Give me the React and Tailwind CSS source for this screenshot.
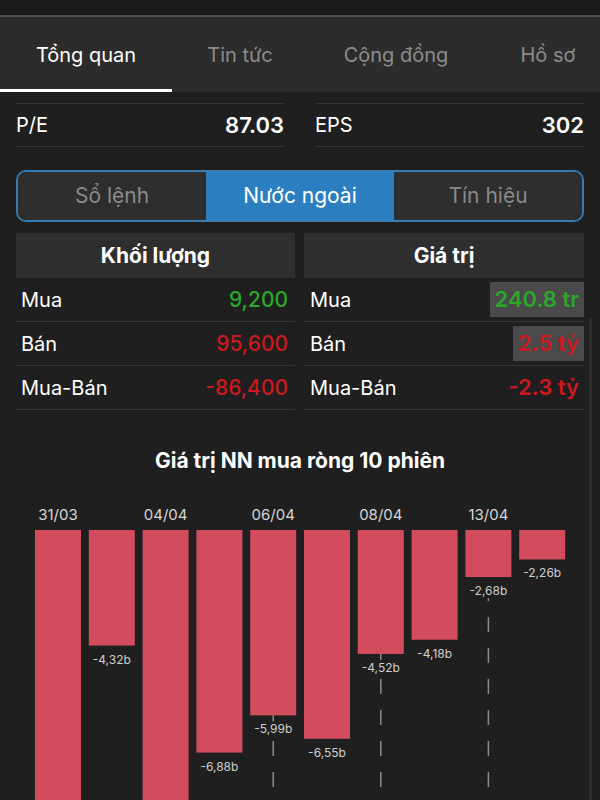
import React from "react";

const tabs = [
  { label: "Tổng quan", w: "w-[172px]", active: true },
  { label: "Tin tức", w: "w-[136px]" },
  { label: "Cộng đồng", w: "w-[176px]" },
  { label: "Hồ sơ", w: "w-[128px]" },
];

const volumeRows = [
  { label: "Mua", value: "9,200", color: "text-[#2ba82b]" },
  { label: "Bán", value: "95,600", color: "text-[#cc181e]" },
  { label: "Mua-Bán", value: "-86,400", color: "text-[#cc181e]" },
];

const valueRows = [
  { label: "Mua", value: "240.8 tr", color: "text-[#2ba82b]", boxed: true },
  { label: "Bán", value: "2.5 tỷ", color: "text-[#cc181e]", boxed: true },
  { label: "Mua-Bán", value: "-2.3 tỷ", color: "text-[#cc181e]" },
];

// net foreign buy value, billions (first and third run off the bottom)
const sessions = [
  { date: "31/03", v: 8.3 },
  { v: 4.32 },
  { date: "04/04", v: 8.6 },
  { v: 6.88 },
  { date: "06/04", v: 5.99 },
  { v: 6.55 },
  { date: "08/04", v: 4.52 },
  { v: 4.18 },
  { date: "13/04", v: 2.68 },
  { v: 2.26 },
];

function NetChart() {
  const top = 30;
  const zero = -35; // zero line sits above the visible area
  const scale = 41.8;
  const pitch = 53.8;
  const barW = 46;
  return (
    <svg width="600" height="300" viewBox="0 0 600 300" className="block">
      {sessions.map((s, i) =>
        s.date ? (
          <line
            key={"g" + i}
            x1={35 + i * pitch + barW / 2}
            x2={35 + i * pitch + barW / 2}
            y1={30}
            y2={300}
            stroke="#8a8a8a"
            strokeWidth="1.5"
            strokeDasharray="15 16"
            strokeDashoffset="6"
          />
        ) : null
      )}
      {sessions.map((s, i) => {
        const x = 35 + i * pitch;
        const bottom = zero + s.v * scale;
        return (
          <g key={i}>
            <rect x={x} y={top} width={barW} height={bottom - top} fill="#d34c5e" />
            {bottom < 290 && (
              <>
                <rect x={x + 2} y={bottom + 6} width={barW - 4} height={15} fill="#1f1f1f" />
                <text
                  x={x + barW / 2}
                  y={bottom + 18}
                  textAnchor="middle"
                  fontSize="12"
                  fill="#cfcfcf"
                  fontFamily="Inter, 'Liberation Sans', sans-serif"
                >
                  {"-" + s.v.toFixed(2).replace(".", ",") + "b"}
                </text>
              </>
            )}
            {s.date && (
              <text
                x={x + barW / 2}
                y={20}
                textAnchor="middle"
                fontSize="15"
                fill="#d6d6d6"
                fontFamily="Inter, 'Liberation Sans', sans-serif"
              >
                {s.date}
              </text>
            )}
          </g>
        );
      })}
    </svg>
  );
}

export default function App() {
  return (
    <div className="relative w-[600px] h-[800px] overflow-hidden bg-[#1f1f1f] font-['Inter','Liberation_Sans',sans-serif] text-white">
      {/* status strip */}
      <div className="h-[15px] bg-[#1b1b1b]" />
      <div className="h-[2px] bg-[#4d4d4d]" />

      {/* top tabs */}
      <nav className="flex h-[75px] bg-[#2c2c2c]">
        {tabs.map((t) => (
          <div
            key={t.label}
            className={`${t.w} shrink-0 flex items-center justify-center text-[20px] ${
              t.active ? "text-white border-b-[3px] border-white pt-[3px]" : "text-[#8c8c8c]"
            }`}
          >
            {t.label}
          </div>
        ))}
      </nav>

      {/* P/E, EPS */}
      <div className="mt-[11px] grid grid-cols-[268px_269px] gap-x-[31px] px-[16px]">
        <div className="flex h-[44px] items-center justify-between border-y border-[#353535] text-[20px]">
          <span>P/E</span>
          <span className="text-[22px] font-semibold">87.03</span>
        </div>
        <div className="flex h-[44px] items-center justify-between border-y border-[#353535] text-[20px]">
          <span>EPS</span>
          <span className="text-[22px] font-semibold">302</span>
        </div>
      </div>

      {/* segmented control */}
      <div className="mx-[16px] mt-[23px] flex h-[52px] overflow-hidden rounded-[10px] border-2 border-[#3a7aac] text-[21px]">
        <div className="flex flex-1 items-center justify-center bg-[#2e2e2e] text-[#8a8a8a]">Sổ lệnh</div>
        <div className="flex flex-1 items-center justify-center bg-[#2b7fc0] text-white">Nước ngoài</div>
        <div className="flex flex-1 items-center justify-center bg-[#2e2e2e] text-[#8a8a8a]">Tín hiệu</div>
      </div>

      {/* foreign trading table */}
      <div className="mt-[11px] grid grid-cols-[279px_280px] gap-x-[9px] px-[16px]">
        <div>
          <div className="flex h-[45px] items-center justify-center bg-[#2e2e2e] text-[21px] font-bold">Khối lượng</div>
          {volumeRows.map((r) => (
            <div key={r.label} className="flex h-[44px] items-center justify-between border-b border-[#353535] pl-[5px] pr-[7px] text-[20px]">
              <span>{r.label}</span>
              <span className={`${r.color} text-[21px] font-medium`}>{r.value}</span>
            </div>
          ))}
        </div>
        <div>
          <div className="flex h-[45px] items-center justify-center bg-[#2e2e2e] text-[21px] font-bold">Giá trị</div>
          {valueRows.map((r) => (
            <div key={r.label} className="flex h-[44px] items-center justify-between border-b border-[#353535] pl-[6px] text-[20px]">
              <span>{r.label}</span>
              <span
                className={`${r.color} text-[22px] font-semibold flex h-[35px] items-center px-[5px] ${r.boxed ? "bg-[#4a4a4a]" : ""}`}
              >
                {r.value}
              </span>
            </div>
          ))}
        </div>
      </div>

      {/* chart */}
      <div className="flex h-[90px] justify-center pt-[39px]">
        <h2 className="text-[21px] font-bold leading-[24px]">Giá trị NN mua ròng 10 phiên</h2>
      </div>
      <NetChart />

      {/* scroll indicator */}
      <div className="absolute left-[589px] top-[317px] h-[483px] w-[3px] rounded-full bg-[#2e2e2e]" />
    </div>
  );
}
